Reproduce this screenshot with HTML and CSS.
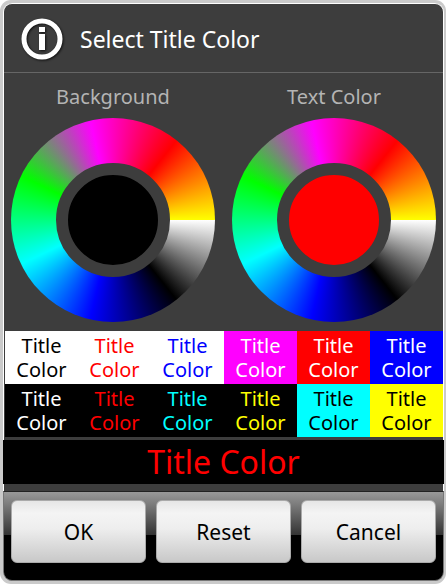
FILE: index.html
```html
<!DOCTYPE html>
<html lang="en">
<head>
    <meta charset="UTF-8">
    <meta name="viewport" content="width=device-width, initial-scale=1.0">
    <title>Select Title Color</title>
    <link rel="stylesheet" href="styles.css">
</head>
<body>
    <div class="frame">
        <div class="dialog" role="dialog" aria-labelledby="dialog-title">
            <header class="title-bar">
                <svg class="info-icon" viewBox="0 0 44 44" aria-hidden="true">
                    <circle cx="22" cy="22" r="18" fill="none" stroke="#fff" stroke-width="5"/>
                    <path d="M19 10h6v5h-6zM19 17h6v16h-6z" fill="#fff"/>
                </svg>
                <h1 id="dialog-title">Select Title Color</h1>
            </header>

            <div class="pickers">
                <section class="picker">
                    <h2>Background</h2>
                    <div class="wheel">
                        <button class="wheel-center black" type="button" aria-label="Use background color"></button>
                    </div>
                </section>
                <section class="picker">
                    <h2>Text Color</h2>
                    <div class="wheel">
                        <button class="wheel-center red" type="button" aria-label="Use text color"></button>
                    </div>
                </section>
            </div>

            <div class="presets">
                <button class="preset black-on-white" type="button">Title Color</button>
                <button class="preset red-on-white" type="button">Title Color</button>
                <button class="preset blue-on-white" type="button">Title Color</button>
                <button class="preset white-on-magenta" type="button">Title Color</button>
                <button class="preset white-on-red" type="button">Title Color</button>
                <button class="preset white-on-blue" type="button">Title Color</button>
                <button class="preset white-on-black" type="button">Title Color</button>
                <button class="preset red-on-black" type="button">Title Color</button>
                <button class="preset cyan-on-black" type="button">Title Color</button>
                <button class="preset yellow-on-black" type="button">Title Color</button>
                <button class="preset black-on-cyan" type="button">Title Color</button>
                <button class="preset black-on-yellow" type="button">Title Color</button>
            </div>

            <p class="preview">Title Color</p>

            <footer class="actions">
                <button class="action" type="button">OK</button>
                <button class="action" type="button">Reset</button>
                <button class="action" type="button">Cancel</button>
            </footer>
        </div>
    </div>
</body>
</html>
```

FILE: styles.css
```css
* {
    box-sizing: border-box;
}

body {
    margin: 0;
    background: #fff;
    font-family: "Noto Sans", "Open Sans", sans-serif;
    color: #fff;
}

h1, h2, p {
    margin: 0;
    font-weight: normal;
}

button {
    padding: 0;
    border: none;
    font-family: inherit;
    cursor: pointer;
}

.frame {
    padding: 3px 2px 3px 3px;
    border-radius: 11px;
    background: #cacaca;
}

.dialog {
    border: 1px solid #fff;
    border-bottom: none;
    border-radius: 9px;
    background: #3d3d3d;
}

/* Title bar */
.title-bar {
    display: flex;
    align-items: center;
    gap: 16px;
    height: 69px;
    padding: 2px 16px 0;
    border-bottom: 1px solid #666;
}

.info-icon {
    width: 44px;
    height: 44px;
    filter: drop-shadow(1px 1px 1px #111);
}

h1 {
    font-size: 23px;
    line-height: 32px;
}

/* Color wheels */
.pickers {
    display: flex;
    justify-content: space-between;
    padding: 9px 7px;
}

.picker {
    display: flex;
    flex-direction: column;
    align-items: center;
    gap: 6px;
}

h2 {
    font-size: 20px;
    line-height: 30px;
    color: #b4b4b4;
}

.wheel {
    display: flex;
    align-items: center;
    justify-content: center;
    width: 204px;
    height: 204px;
    border-radius: 50%;
    background: conic-gradient(from 90deg, #fff, #000, #00f, #0ff, #0f0, #f0f, #f00, #ff0);
}

.wheel-center {
    width: 114px;
    height: 114px;
    border: 12px solid #3d3d3d;
    border-radius: 50%;
}

.black { background: #000; }
.red { background: #f00; }

/* Preset combinations */
.presets {
    display: grid;
    grid-template-columns: repeat(6, 1fr);
    margin: 0 0 3px 1px;
}

.preset {
    height: 53px;
    padding: 0 8px;
    font-size: 20px;
    line-height: 24px;
}

.black-on-white { background: #fff; color: #000; }
.red-on-white { background: #fff; color: #f00; }
.blue-on-white { background: #fff; color: #00f; }
.white-on-magenta { background: #f0f; color: #fff; }
.white-on-red { background: #f00; color: #fff; }
.white-on-blue { background: #00f; color: #fff; }
.white-on-black { background: #000; color: #fff; }
.red-on-black { background: #000; color: #f00; }
.cyan-on-black { background: #000; color: #0ff; }
.yellow-on-black { background: #000; color: #ff0; }
.black-on-cyan { background: #0ff; color: #000; }
.black-on-yellow { background: #ff0; color: #000; }

/* Preview */
.preview {
    margin: 0 -1px 7px;
    background: #000;
    color: #f00;
    font-size: 32px;
    line-height: 44px;
    text-align: center;
}

/* Buttons */
.actions {
    display: grid;
    grid-template-columns: repeat(3, 1fr);
    gap: 10px;
    margin: 0 -1px;
    padding: 8px 7px 17px;
    border: 1px solid #777;
    border-top-color: #222;
    border-radius: 0 0 9px 9px;
    background: linear-gradient(#999, #333 43px, #000 43px);
}

.action {
    height: 63px;
    border: 1px solid #aaa;
    border-radius: 6px;
    background: linear-gradient(#e6e6e6, #f4f4f4 20%, #eee 45%, #c8c8c8);
    color: #000;
    font-size: 21px;
}
```
